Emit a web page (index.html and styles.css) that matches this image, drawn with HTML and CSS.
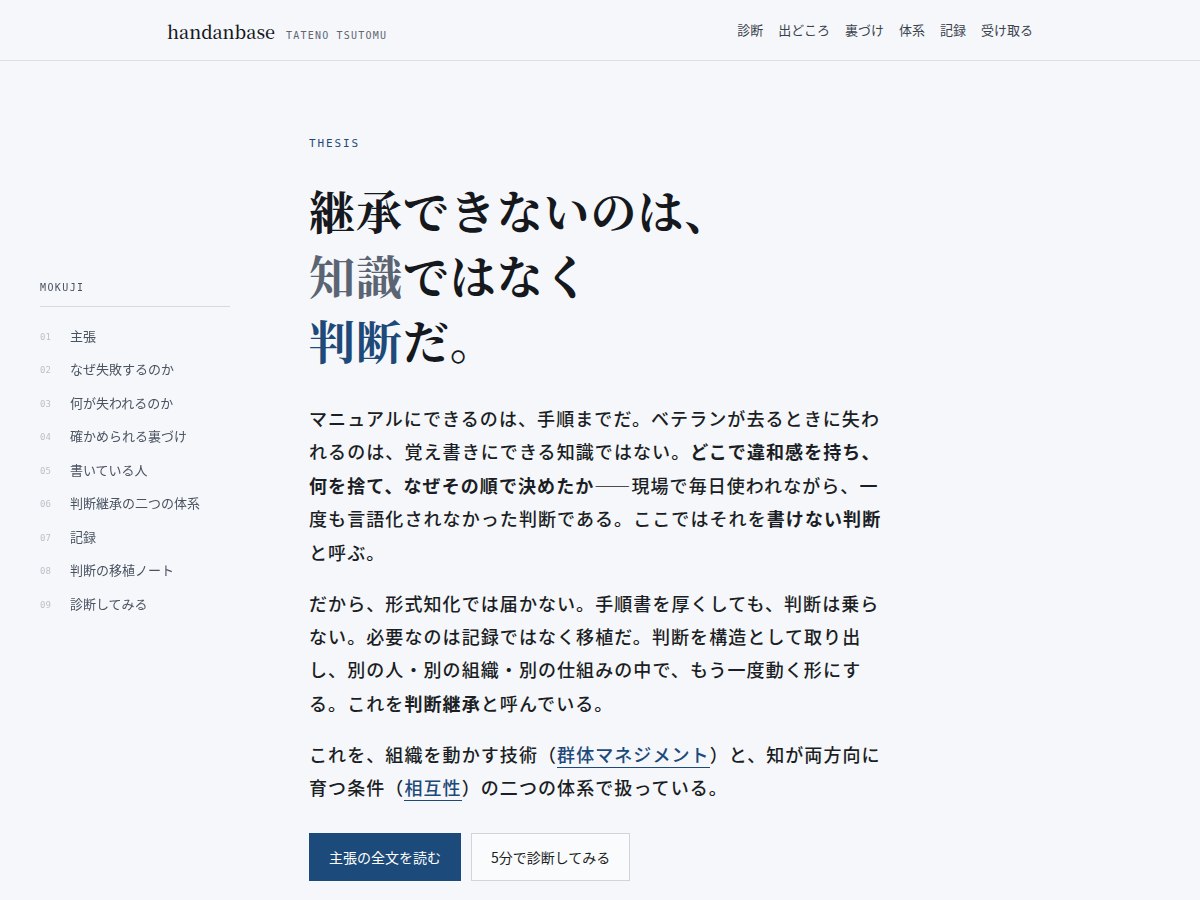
FILE: index.html
```html
<!DOCTYPE html>
<html lang="ja">
<head>
<meta charset="utf-8">
<title>handanbase</title>
<link rel="stylesheet" href="styles.css">
</head>
<body>
<header class="site-header">
  <div class="header-inner">
    <a class="brand" href="#">
      <span class="brand-name">handanbase</span>
      <span class="brand-author">TATENO TSUTOMU</span>
    </a>
    <nav class="site-nav">
      <a href="#">診断</a>
      <a href="#">出どころ</a>
      <a href="#">裏づけ</a>
      <a href="#">体系</a>
      <a href="#">記録</a>
      <a href="#">受け取る</a>
    </nav>
  </div>
</header>

<aside class="toc">
  <div class="toc-title">MOKUJI</div>
  <ol class="toc-list">
    <li><span class="toc-num">01</span><a href="#">主張</a></li>
    <li><span class="toc-num">02</span><a href="#">なぜ失敗するのか</a></li>
    <li><span class="toc-num">03</span><a href="#">何が失われるのか</a></li>
    <li><span class="toc-num">04</span><a href="#">確かめられる裏づけ</a></li>
    <li><span class="toc-num">05</span><a href="#">書いている人</a></li>
    <li><span class="toc-num">06</span><a href="#">判断継承の二つの体系</a></li>
    <li><span class="toc-num">07</span><a href="#">記録</a></li>
    <li><span class="toc-num">08</span><a href="#">判断の移植ノート</a></li>
    <li><span class="toc-num">09</span><a href="#">診断してみる</a></li>
  </ol>
</aside>

<main class="main">
  <section class="thesis">
    <div class="eyebrow">THESIS</div>
    <h1 class="headline">継承できないのは、<br><span class="muted">知識</span>ではなく<br><span class="accent">判断</span>だ。</h1>
    <p>マニュアルにできるのは、手順までだ。ベテランが去るときに失われるのは、覚え書きにできる知識ではない。<strong>どこで違和感を持ち、何を捨て、なぜその順で決めたか</strong>——現場で毎日使われながら、一度も言語化されなかった判断である。ここではそれを<strong>書けない判断</strong>と呼ぶ。</p>
    <p>だから、形式知化では届かない。手順書を厚くしても、判断は乗らない。必要なのは記録ではなく移植だ。判断を構造として取り出し、別の人・別の組織・別の仕組みの中で、もう一度動く形にする。これを<strong>判断継承</strong>と呼んでいる。</p>
    <p>これを、組織を動かす技術（<a class="inline-link" href="#">群体マネジメント</a>）と、知が両方向に育つ条件（<a class="inline-link" href="#">相互性</a>）の二つの体系で扱っている。</p>
    <div class="actions">
      <a class="btn btn-primary" href="#">主張の全文を読む</a>
      <a class="btn btn-secondary" href="#">5分で診断してみる</a>
    </div>
  </section>
</main>
</body>
</html>
```

FILE: styles.css
```css
html, body {
  margin: 0;
  padding: 0;
}

body {
  background: #f5f7fa;
  color: #1b1e24;
  font-family: "Noto Sans CJK JP", "Noto Sans", sans-serif;
}

a {
  color: inherit;
  text-decoration: none;
}

.site-header {
  border-bottom: 1px solid #dde1e7;
}

.header-inner {
  width: 866px;
  height: 60px;
  margin: 0 auto;
  display: flex;
  align-items: center;
  justify-content: space-between;
}

.brand {
  display: flex;
  align-items: baseline;
  gap: 11px;
  margin-top: 2px;
}

.brand-name {
  font-family: "Noto Serif CJK JP", "DejaVu Serif", serif;
  font-weight: 500;
  font-size: 18px;
  letter-spacing: 0;
  color: #15181d;
}

.brand-author {
  font-family: "DejaVu Sans Mono", "Liberation Mono", monospace;
  font-size: 10px;
  letter-spacing: 0.12em;
  color: #5f6673;
}

.site-nav {
  display: flex;
  gap: 15px;
  font-size: 13px;
  color: #3b424d;
  margin-top: -2px;
}

.toc {
  position: fixed;
  left: 40px;
  top: 281px;
  width: 190px;
}

.toc-title {
  font-family: "DejaVu Sans Mono", "Liberation Mono", monospace;
  font-size: 10px;
  line-height: 14px;
  letter-spacing: 0.14em;
  color: #4a5260;
  padding-bottom: 11px;
  border-bottom: 1px solid #d6dae0;
}

.toc-list {
  list-style: none;
  margin: 0;
  padding: 12px 0 0;
}

.toc-list li {
  display: flex;
  align-items: center;
  height: 33.5px;
  font-size: 13px;
  line-height: 20px;
  color: #4a5361;
}

.toc-num {
  width: 30px;
  flex: none;
  font-family: "DejaVu Sans Mono", "Liberation Mono", monospace;
  font-size: 9px;
  color: #bcc2ca;
  padding-top: 2px;
}

.main {
  width: 582px;
  margin: 0 auto;
  padding: 75px 0 60px;
}

.eyebrow {
  font-family: "DejaVu Sans Mono", "Liberation Mono", monospace;
  font-size: 11px;
  line-height: 16px;
  letter-spacing: 0.17em;
  color: #1e4a7a;
  margin-bottom: 25px;
}

.headline {
  font-family: "Noto Serif CJK JP", "Noto Serif JP", serif;
  font-weight: 700;
  font-size: 46px;
  line-height: 65px;
  letter-spacing: 0.02em;
  color: #15181d;
  margin: 0 0 30px;
}

.headline .muted {
  color: #5a6472;
}

.headline .accent {
  color: #1e4a7a;
}

.thesis p {
  font-size: 18px;
  font-weight: 500;
  line-height: 33.4px;
  letter-spacing: 0.06em;
  margin: 0 0 17.5px;
}

.thesis strong {
  font-weight: 700;
}

.inline-link {
  color: #1e4a7a;
  font-weight: 500;
  border-bottom: 1px solid #1e4a7a;
}

.actions {
  display: flex;
  gap: 10px;
  margin-top: 29px;
}

.btn {
  display: inline-block;
  height: 48px;
  box-sizing: border-box;
  line-height: 46px;
  padding: 0 19px;
  font-size: 14px;
  border: 1px solid transparent;
}

.btn-primary {
  background: #1c4a7a;
  border-color: #1c4a7a;
  color: #ffffff;
}

.btn-secondary {
  background: #fafbfc;
  border-color: #d0d5dc;
  color: #1b1e24;
}
```
